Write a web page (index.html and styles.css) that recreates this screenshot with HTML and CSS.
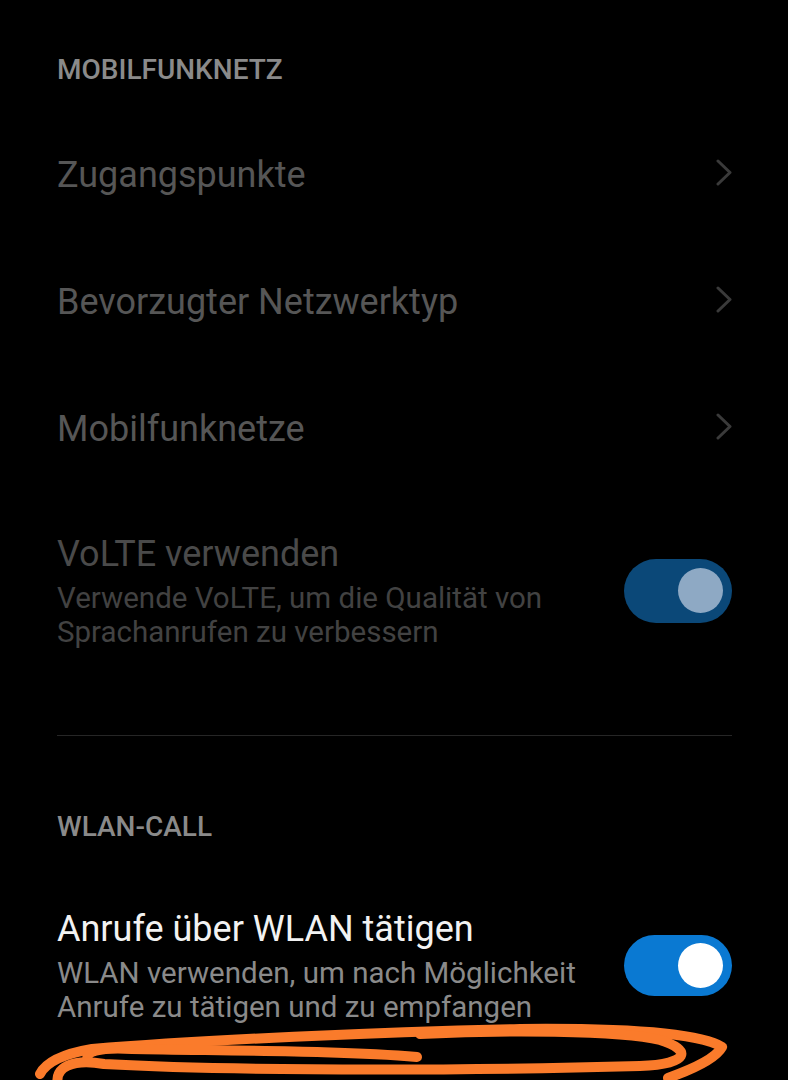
FILE: index.html
```html
<!DOCTYPE html>
<html lang="de">
<head>
<meta charset="utf-8">
<title>Mobilfunknetz</title>
<link rel="stylesheet" href="styles.css">
</head>
<body>
<main class="screen">
  <h2 class="section-header first">MOBILFUNKNETZ</h2>
  <div class="nav-list">
    <div class="nav-row">
      <span class="row-title dim">Zugangspunkte</span>
      <svg class="chevron" viewBox="0 0 16 28" width="16" height="28"><path d="M2 2 L14 13.5 L2 25" /></svg>
    </div>
    <div class="nav-row">
      <span class="row-title dim">Bevorzugter Netzwerktyp</span>
      <svg class="chevron" viewBox="0 0 16 28" width="16" height="28"><path d="M2 2 L14 13.5 L2 25" /></svg>
    </div>
    <div class="nav-row">
      <span class="row-title dim">Mobilfunknetze</span>
      <svg class="chevron" viewBox="0 0 16 28" width="16" height="28"><path d="M2 2 L14 13.5 L2 25" /></svg>
    </div>
  </div>
  <div class="toggle-row volte">
    <div class="toggle-text">
      <div class="row-title disabled">VoLTE verwenden</div>
      <div class="row-sub disabled-sub">Verwende VoLTE, um die Qualität von Sprachanrufen zu verbessern</div>
    </div>
    <div class="switch switch-disabled"><span class="thumb"></span></div>
  </div>
  <hr class="divider">
  <h2 class="section-header second">WLAN-CALL</h2>
  <div class="toggle-row wlan">
    <div class="toggle-text">
      <div class="row-title active">Anrufe über WLAN tätigen</div>
      <div class="row-sub">WLAN verwenden, um nach Möglichkeit Anrufe zu tätigen und zu empfangen</div>
    </div>
    <div class="switch switch-on"><span class="thumb"></span></div>
  </div>
  <svg class="scribble" viewBox="0 0 788 80" width="788" height="80">
    <path d="M40 74 C46 62 62 54 92 49 C200 40 380 32 520 29 C620 28 700 33 722 47 C716 58 696 68 668 78" />
    <path d="M88 60 C84 52 98 47 132 49 C250 51 350 51 417 57" />
    <path d="M58 84 C54 68 72 58 104 64 C250 72 500 70 640 66 C690 64 692 50 660 40 C620 30 500 30 420 34" />
  </svg>
</main>
</body>
</html>
```

FILE: styles.css
```css
* { box-sizing: border-box; }

html, body {
  margin: 0;
  padding: 0;
  background: #000;
}

body {
  font-family: Roboto, "Noto Sans", "Liberation Sans", sans-serif;
  width: 788px;
  height: 1080px;
  overflow: hidden;
}

.screen {
  position: relative;
  height: 1080px;
  padding: 0 56px 0 57px;
}

.section-header {
  margin: 0;
  font-size: 28px;
  font-weight: 500;
  line-height: 32px;
  color: #8a8a8a;
}

.section-header.first { padding-top: 54px; }
.section-header.second { margin-top: 75px; }

.nav-list {
  margin-top: 25px;
  display: flex;
  flex-direction: column;
}

.nav-row {
  height: 127px;
  display: flex;
  align-items: center;
  justify-content: space-between;
}

.row-title {
  font-size: 36px;
  line-height: 44px;
  font-weight: 400;
}

.dim { color: #565656; }
.disabled { color: #4a4a4a; }
.active { color: #f2f2f2; }

.chevron {
  flex: none;
  margin-top: -4px;
}

.chevron path {
  fill: none;
  stroke: #3a3a3a;
  stroke-width: 3;
  stroke-linecap: round;
  stroke-linejoin: round;
}

.toggle-row {
  display: flex;
  align-items: center;
  justify-content: space-between;
  gap: 40px;
}

.toggle-row.volte { padding: 40px 0 86px; }
.toggle-row.wlan { margin-top: 64px; }

.toggle-text { flex: 1; min-width: 0; }

.row-sub {
  margin-top: 5px;
  font-size: 29.5px;
  line-height: 34px;
  color: #8a8a8a;
}

.wlan .row-sub { margin-top: 5px; }

.disabled-sub { color: #424242; }

.switch {
  flex: none;
  width: 108px;
  height: 64px;
  border-radius: 32px;
  display: flex;
  align-items: center;
  justify-content: flex-end;
  padding: 0 9px;
}

.thumb {
  width: 45px;
  height: 45px;
  border-radius: 50%;
}

.switch-disabled { background: #0b4878; }
.switch-disabled .thumb { background: #8ea9c4; }

.switch-on { background: #0a79d2; height: 61px; }
.switch-on .thumb { background: #ffffff; }

.divider {
  margin: 0;
  border: 0;
  height: 1px;
  background: #262626;
}

.scribble {
  position: absolute;
  left: 0;
  bottom: 0;
}

.scribble path {
  fill: none;
  stroke: #fa7b2b;
  stroke-width: 10;
  stroke-linecap: round;
  stroke-linejoin: round;
}
```
